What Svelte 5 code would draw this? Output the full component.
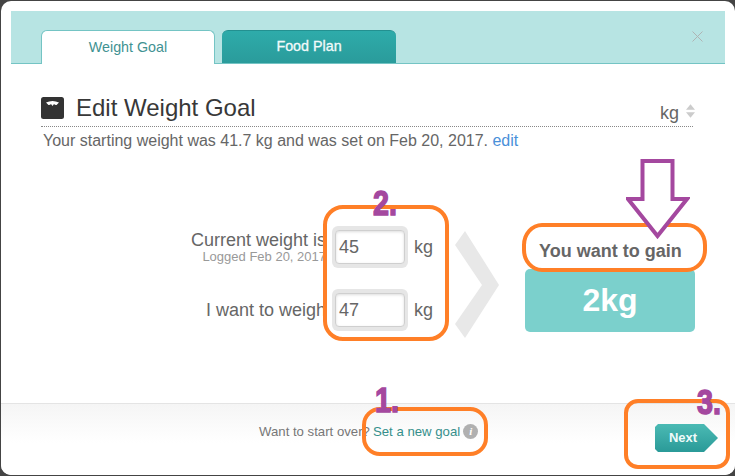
<script>
  const rows = [
    { label: 'Current weight is', sub: 'Logged Feb 20, 2017', value: '45' },
    { label: 'I want to weigh', sub: '', value: '47' }
  ];
</script>

<div class="modal">
  <header class="head">
    <div class="tab active">Weight Goal</div>
    <div class="tab other">Food Plan</div>
    <svg class="close" width="11" height="11" viewBox="0 0 11 11"><path d="M0.5 0.5L10.5 10.5M10.5 0.5L0.5 10.5" stroke="#aeb4b4" stroke-width="1" fill="none"/></svg>
  </header>

  <main class="body">
    <div class="title-row">
      <svg class="scale" width="23" height="22" viewBox="0 0 23 22">
        <rect width="23" height="22" rx="2.5" fill="#333"/>
        <path d="M5 5.5Q11.5 2.5 18 5.5L15.5 8Q14 8.2 13 7L11.5 9L10 7Q9 8.2 7.5 8Z" fill="#fff"/>
      </svg>
      <h1>Edit Weight Goal</h1>
      <span class="unit">kg</span>
      <svg class="updown" width="9" height="14" viewBox="0 0 10 15"><path d="M5 0L10 6H0ZM0 9H10L5 15Z" fill="#ccc"/></svg>
    </div>
    <p class="start">Your starting weight was 41.7 kg and was set on Feb 20, 2017. <span class="edit">edit</span></p>

    <div class="form">
      <div class="fields">
        {#each rows as r}
          <div class="field">
            <div class="labels">
              <div class="label">{r.label}</div>
              {#if r.sub}<div class="sub">{r.sub}</div>{/if}
            </div>
            <div class="input-wrap"><div class="input">{r.value}</div></div>
            <span class="kg">kg</span>
          </div>
        {/each}
      </div>
      <svg class="chev" width="44" height="107" viewBox="0 0 44 107"><path d="M0 14L10 0L44 54L10 107L0 93L27 54Z" fill="#e8e8e8"/></svg>
      <div class="result">
        <div class="result-label">You want to gain</div>
        <div class="result-box">2kg</div>
      </div>
    </div>
  </main>

  <footer class="foot">
    <div class="over">
      <span>Want to start over?</span>
      <span class="link">Set a new goal</span>
      <span class="info">i</span>
    </div>
    <div class="next">Next</div>
  </footer>

  <div class="ring r1"></div>
  <div class="ring r2"></div>
  <div class="ring r3"></div>
  <div class="ring r4"></div>
  <span class="num n1">1.</span>
  <span class="num n2">2.</span>
  <span class="num n3">3.</span>
  <svg class="arrow" width="64" height="80" viewBox="0 0 64 80">
    <path d="M16.5 2H46.5V40H61L31.5 77L2 40H16.5Z" fill="#fff" stroke="#a4489f" stroke-width="4"/>
  </svg>
</div>

<style>
  :global(body) {
    margin: 0;
    background: #444;
    font-family: "Liberation Sans", Arial, sans-serif;
  }
  .modal {
    position: relative;
    box-sizing: border-box;
    width: 734px;
    height: 474px;
    margin: 1px 0 0 1px;
    padding: 10px 10px 0;
    background: #fff;
    border-radius: 10px;
    overflow: hidden;
    display: flex;
    flex-direction: column;
  }
  .head {
    position: relative;
    box-sizing: border-box;
    height: 53px;
    padding: 19px 0 0 30px;
    background: #b7e4e3;
    border-bottom: 1px solid #74c4c4;
    display: flex;
    gap: 7px;
    flex: none;
  }
  .tab {
    box-sizing: border-box;
    width: 174px;
    border-radius: 6px 6px 0 0;
    font-size: 14.3px;
    text-align: center;
  }
  .active {
    height: 34px;
    background: #fff;
    color: #3f9292;
    border: 1px solid #74c4c4;
    border-bottom: 0;
    line-height: 32px;
  }
  .other {
    height: 33px;
    background: linear-gradient(#2eabaa, #2a9b9b);
    border-top: 1px solid #239090;
    color: #f2fafa;
    -webkit-text-stroke: 0.3px #f2fafa;
    line-height: 31px;
  }
  .close { position: absolute; right: 22px; top: 20px; }

  .body { flex: 1; padding: 0 32px 0 30px; min-height: 0; }
  .title-row {
    box-sizing: border-box;
    display: flex;
    align-items: center;
    height: 63px;
    padding-top: 26px;
    border-bottom: 1px dotted #888;
  }
  .scale { margin-right: 12px; flex: none; }
  h1 {
    margin: 0;
    font-size: 24px;
    font-weight: 400;
    color: #383838;
    flex: 1;
    line-height: 28px;
  }
  .unit { font-size: 18px; color: #666; margin-top: 10px; }
  .updown { margin: 6px -2px 0 7px; }
  .start {
    margin: 5px 0 0 2px;
    font-size: 16px;
    line-height: 18px;
    color: #666;
    white-space: nowrap;
  }
  .edit { color: #4a90d9; }

  .form { display: flex; margin-top: 76px; }
  .fields {
    width: 392px;
    flex: none;
    display: flex;
    flex-direction: column;
    gap: 21px;
  }
  .field { display: flex; align-items: center; height: 42px; }
  .labels { width: 285px; text-align: right; flex: none; }
  .label { font-size: 18px; line-height: 20px; color: #666; }
  .sub { font-size: 13px; line-height: 14px; color: #999; }
  .input-wrap {
    box-sizing: border-box;
    width: 76px;
    height: 42px;
    margin-left: 6px;
    padding: 4px 3px;
    background: #e6e6e6;
    border-radius: 6px;
    flex: none;
  }
  .input {
    box-sizing: border-box;
    height: 34px;
    background: #fff;
    border: 1px solid #cfcfcf;
    border-radius: 4px;
    box-shadow: inset 0 1px 3px #ddd;
    font-size: 18px;
    line-height: 32px;
    color: #666;
    padding-left: 3px;
  }
  .kg { margin-left: 6px; font-size: 18px; color: #666; }
  .chev { margin: 5px 0 0 22px; flex: none; }
  .result { margin-left: 26px; width: 170px; flex: none; }
  .result-label {
    font-size: 18px;
    font-weight: 700;
    color: #666;
    line-height: 20px;
    height: 43px;
    padding: 15px 0 0 14px;
    box-sizing: border-box;
    white-space: nowrap;
  }
  .result-box {
    height: 63px;
    background: #7bd0cc;
    border-radius: 5px;
    color: #fff;
    font-size: 32px;
    font-weight: 700;
    text-align: center;
    line-height: 62px;
  }

  .foot {
    position: relative;
    flex: none;
    height: 71px;
    margin: 0 -10px;
    border-top: 1px solid #e4e4e4;
    background: linear-gradient(#f5f5f5, #fff 55%);
    display: flex;
    align-items: flex-start;
    padding: 0 17px 0 258px;
    justify-content: space-between;
  }
  .over {
    display: flex;
    align-items: center;
    gap: 3px;
    font-size: 13.2px;
    color: #777;
    height: 16px;
    margin-top: 19px;
    white-space: nowrap;
  }
  .link { color: #358f8b; }
  .info {
    width: 15px;
    height: 15px;
    border-radius: 50%;
    background: #b0b0b0;
    color: #fff;
    font: italic 700 11px/15px "Liberation Serif", serif;
    text-align: center;
  }
  .next {
    box-sizing: border-box;
    width: 63px;
    height: 28px;
    margin-top: 20px;
    padding-right: 7px;
    background: linear-gradient(#4bbab4, #2a9a98);
    clip-path: polygon(3px 0, 49px 0, 63px 14px, 49px 28px, 3px 28px, 0 25px, 0 3px);
    color: #eefafa;
    font-size: 13px;
    font-weight: 700;
    line-height: 28px;
    text-align: center;
  }

  .ring {
    position: absolute;
    box-sizing: border-box;
    border: 4px solid #ff7f27;
  }
  .r1 { left: 322px; top: 204px; width: 126px; height: 136px; border-radius: 20px; }
  .r2 { left: 521px; top: 222px; width: 185px; height: 49px; border-radius: 20px / 22px; }
  .r3 { left: 361px; top: 406px; width: 126px; height: 49px; border-radius: 18px; }
  .r4 { left: 623px; top: 398px; width: 106px; height: 70px; border-radius: 14px; }
  .num {
    position: absolute;
    font-weight: 700;
    color: #a4489f;
    font-size: 35px;
    line-height: 30px;
    -webkit-text-stroke: 1.5px #a4489f;
    transform: scaleX(0.82);
    transform-origin: left top;
  }
  .n1 { left: 374px; top: 384px; }
  .n2 { left: 372px; top: 187px; }
  .n3 { left: 696px; top: 386px; }
  .arrow { position: absolute; left: 625px; top: 158px; }
</style>
